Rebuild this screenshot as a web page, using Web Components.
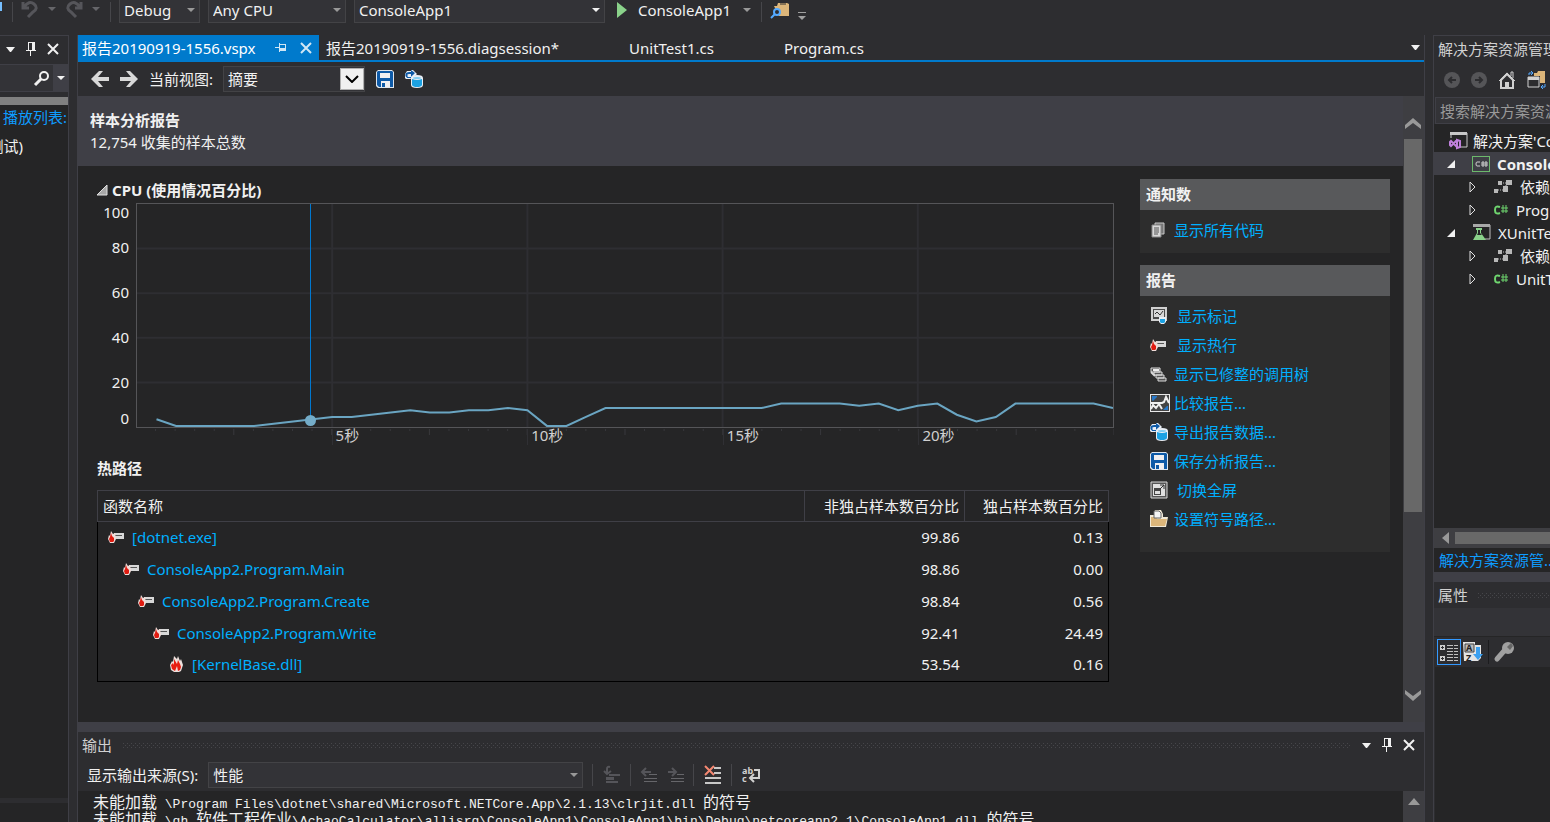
<!DOCTYPE html>
<html lang="zh-CN">
<head>
<meta charset="utf-8">
<title>ConsoleApp1 - Microsoft Visual Studio</title>
<style>
    html, body {
        margin: 0;
        height: 100%;
    }
    body {
        --shell: #2d2d30;
        --content: #252526;
        --line: #3f3f46;
        --field: #333337;
        --accent: #007acc;
        --link: #00b0ff;
        background: var(--shell);
        color: #f1f1f1;
        font: 15px/22px "Noto Sans", "Noto Sans CJK SC", sans-serif;
        overflow: hidden;
    }
</style>
</head>
<body>
<ide-shell></ide-shell>

<script>
const ICONS = {
    back: [18, 18, '<path d="M8 1 0 9l8 8h4L7 11h11V7H7l5-6z" fill="#d8d8d8"/>'],
    forward: [18, 18, '<path d="M10 1l8 8-8 8H6l5-6H0V7h11L6 1z" fill="#d8d8d8"/>'],
    save: [18, 18, '<path d="M2 0h14l2 2v16H2l-2-2V2z" fill="#dfe6ee"/><path d="M2 1h14l1 1v15H3l-2-2V2z" fill="#0e5aa7"/><path d="M4 3h10v5H4zM5 11h9v6H5z" fill="#f0eff1"/><path d="M6 13h3v4H6z" fill="#0e5aa7"/>'],
    export: [18, 18, '<path d="M0 8V4l2-3h4V0h2l4 4-4 4-3 1H1z" fill="#e8eef5"/><path d="M2 7Q0 3 4 3h3" fill="none" stroke="#0e5aa7" stroke-width="2"/><path d="M6 0l4 3-4 4zM2 7h4v1H2z" fill="#0e5aa7"/><path d="M6 8q0-3 6-3t6 3v7q0 3-6 3t-6-3z" fill="#e8eef5"/><path d="M7 9v6q1 2 5 2t5-2V9q-5 2-10 0z" fill="#1ba1e2"/><ellipse cx="12" cy="8" rx="4" ry="1" fill="#7fcdf2"/>'],
    undo: [18, 18, '<path d="M2 2v6h6M3 7q5-7 10-3t-1 8l-5 5" fill="none" stroke="#55555a" stroke-width="3"/>'],
    redo: [18, 18, '<path d="M16 2v6h-6M15 7Q10 0 5 4t1 8l5 5" fill="none" stroke="#55555a" stroke-width="3"/>'],
    down: [9, 5, '<path d="M0 0h9L5 5H4z" fill="currentColor"/>'],
    smallDown: [8, 4, '<path d="M0 0h8L4 4z" fill="currentColor"/>'],
    play: [12, 16, '<path d="M1 0l10 8-10 8z" fill="#8ad28a"/>'],
    find: [18, 18, '<path d="M3 5h3l1-3h9l2 1v12H8z" fill="#dcb67a"/><path d="M9 3h6" stroke="#2d2d30" stroke-width="1"/><circle cx="6" cy="11" r="3" fill="#2d2d30" stroke="#55aaff" stroke-width="2"/><path d="M4 13l-4 4" stroke="#55aaff" stroke-width="2"/>'],
    overflow: [8, 8, '<path d="M0 0h8v1H0zM0 4h8L4 8z" fill="#a0a0a0"/>'],
    pin: [10, 14, '<path d="M0 8h10v1H0zM2 0h7v9H8V1H3v8H2zM4 9h1v5H4zM6 1h2v7H6z" fill="currentColor"/>'],
    pinned: [12, 10, '<path d="M0 4h4v1H0zM4 0h1v9H4zM5 1h6v7H5V7h5V2H5zM5 5h5v2H5z" fill="currentColor"/>'],
    close: [12, 12, '<path d="M1 1l10 10M11 1L1 11" stroke="currentColor" stroke-width="2"/>'],
    search: [17, 16, '<circle cx="11" cy="6" r="4" fill="none" stroke="#f1f1f1" stroke-width="2"/><path d="M8 9l-6 6" stroke="#f1f1f1" stroke-width="3"/>'],
    navBack: [16, 16, '<circle cx="8" cy="8" r="8" fill="#555558"/><path d="M12 8H5M8 5L5 8l3 3" fill="none" stroke="#2d2d30" stroke-width="2"/>'],
    navForward: [16, 16, '<circle cx="8" cy="8" r="8" fill="#555558"/><path d="M4 8h7M8 5l3 3-3 3" fill="none" stroke="#2d2d30" stroke-width="2"/>'],
    home: [18, 20, '<path d="M1 11l8-8 8 8M13 6V2h2v6" fill="none" stroke="#d0d0d0" stroke-width="1"/><path d="M3 10v8h12v-8L9 4z" fill="none" stroke="#d0d0d0" stroke-width="2"/><path d="M7 12h4v7H7z" fill="#d0d0d0"/>'],
    sync: [20, 18, '<path d="M7 5V2h3l1-2h7v12h-5V5z" fill="#dcb67a"/><path d="M1 6h11v10H1z" fill="#2d2d30" stroke="#d0d0d0" stroke-width="1"/><path d="M1 6h11v3H1z" fill="#d0d0d0"/><path d="M2 4V2h4M4 0l2 2-2 2M18 13v3h-4M16 14l-2 2 2 2" fill="none" stroke="#55aaff" stroke-width="1"/>'],
    solution: [19, 17, '<path d="M2 6V1h16v14h-6" fill="none" stroke="#c8c8c8" stroke-width="1"/><path d="M1 0h17v3H1z" fill="#c8c8c8"/><path d="M8 8v8l3-1V9zL2 14l-1-1v-3l1-1 6 6" fill="none" stroke="#c080dc" stroke-width="2"/>'],
    project: [18, 16, '<path d="M0 0h18v16H0zM1 1v14h16V1z" fill="#6cb96c" fill-rule="evenodd"/><path d="M8 6H5q-1 0-1 2t1 2h3M11 5v6M14 5v6M9 7h7M9 9h7" fill="none" stroke="#d0d0d0" stroke-width="1"/>'],
    testProject: [19, 17, '<path d="M2 3V1h16v14h-5" fill="none" stroke="#c0c0c0" stroke-width="1"/><path d="M1 0h17v3H1z" fill="#a8a8a8"/><path d="M4 4h6v2H9v3l5 7H1l4-7V6H4z" fill="#8ad28a"/><path d="M6 6h2v3l2 2H5l1-2z" fill="#252526"/>'],
    refs: [18, 13, '<path d="M4 1h4v4H4zM12 0h6v5h-6zM0 9h4v4H0zM9 6h5v6H9z" fill="#b8b8b8"/><path d="M9 3h3M4 10h5M12 5v2" stroke="#b8b8b8" stroke-width="1" stroke-dasharray="1 1"/>'],
    csharp: [14, 10, '<path d="M6 2Q1 0 1 5t5 3" fill="none" stroke="#6fd66f" stroke-width="2"/><path d="M9 0v8M12 0v8M7 3h7M7 6h7" fill="none" stroke="#6fd66f" stroke-width="1"/>'],
    open: [8, 8, '<path d="M8 0v8H0z" fill="#f1f1f1"/>'],
    closed: [8, 12, '<path d="M1 1l5 5-5 5z" fill="none" stroke="#e0e0e0" stroke-width="1"/>'],
    expander: [10, 10, '<path d="M10 0v10H0z" fill="#a8a8a8" stroke="#e0e0e0" stroke-width="1"/>'],
    docs: [16, 16, '<path d="M5 1h9v11H5z" fill="#777" stroke="#c8c8c8" stroke-width="1"/><path d="M2 3h9v12H2z" fill="#d8d8d8" stroke="#888" stroke-width="1"/><path d="M4 6h5M4 8h5M4 10h5M4 12h4" stroke="#555" stroke-width="1"/>'],
    marks: [17, 17, '<path d="M2 1h14v12H2z" fill="#4a4a4a" stroke="#d0d0d0" stroke-width="2"/><path d="M4 3h10v7H4z" fill="#d8d8d8"/><path d="M5 7l2-2 3 3 3-4" fill="none" stroke="#333" stroke-width="1"/><path d="M9 10h7v5l-2 2h-3l-2-2z" fill="#e8eef5"/><path d="M10 12h5v3l-1 1h-3l-1-1z" fill="#1ba1e2"/>'],
    hotLine: [16, 12, '<path d="M6 2h10v6H6z" fill="#d8d8d8"/><path d="M7 4h7v1H7z" fill="#555"/><path d="M3 0l2 3 2-1 1 6-2 4H2L0 8l1-4 1 1z" fill="#f0dcd8"/><path d="M3 2l1 3 2 2v3l-1 1H2L1 8l1-2z" fill="#e01b10"/>'],
    flame: [13, 16, '<path d="M4 0l3 3 1-3 2 5 1-2 2 6-2 6-2 1H4l-3-2-1-5 2-4 1 1z" fill="#eee0dc"/><path d="M4 3l3 5 1-4 2 4 1 3-1 3-2 1-1-5-2 5-3-2-1-4 2-2 1 2z" fill="#e81c10"/>'],
    callTree: [17, 16, '<path d="M1 2h9v4H1zM4 6h8v3H4zM6 9h8v3H6zM8 12h8v3H8z" fill="#555" stroke="#dadada" stroke-width="1"/><path d="M3 3h6v2H3z" fill="#eee"/><path d="M1 6l4 4" stroke="#dadada" stroke-width="2"/>'],
    compare: [20, 18, '<path d="M0 0h20v18H0z" fill="#e8e8e8"/><path d="M1 1h18v16H1z" fill="#444"/><path d="M1 15l2-4 3 3 3-4 3 5M1 9h11l2-1 2-5 3 6" fill="none" stroke="#f0f0f0" stroke-width="2"/><path d="M2 6V2h5v1L3 7zM18 12v4h-5l4-4z" fill="#2878c8"/>'],
    fullscreen: [18, 18, '<path d="M1 1h16v16H1z" fill="#555" stroke="#d8d8d8" stroke-width="1"/><path d="M3 3h12v12H3z" fill="#e0e0e0"/><path d="M4 7h7v7H4z" fill="#444"/><path d="M5 10h5v3H5z" fill="#ddd"/><path d="M10 8l4-4M10 4h4v4" fill="none" stroke="#333" stroke-width="1"/>'],
    folder: [18, 18, '<path d="M0 17V5h4l1-5h6l2 4v3h5l-2 10z" fill="#f2ead8"/><path d="M1 16V7h5l1 2h10l-2 7z" fill="#dcb67a"/><path d="M4 1h5l2 2v5H4z" fill="#f5f5f5" stroke="#666" stroke-width="1"/>'],
    goTo: [18, 18, '<path d="M7 1q-3-1-3 2v5M1 5l3 3 4-3M6 9h11M3 16h12" fill="none" stroke="#55555a" stroke-width="2"/><path d="M3 11h8v3H3z" fill="#55555a"/>'],
    prev: [16, 16, '<path d="M1 5h9M5 1L1 5l4 4" fill="none" stroke="#55555a" stroke-width="2"/><path d="M8 7h8v1H8zM3 11h13v1H3zM3 14h13v1H3z" fill="#66666a"/>'],
    next: [16, 16, '<path d="M0 5h8M4 1l4 4-4 4" fill="none" stroke="#55555a" stroke-width="2"/><path d="M9 7h7v1H9zM3 11h13v1H3zM3 14h13v1H3z" fill="#66666a"/>'],
    clear: [18, 18, '<path d="M10 1h7v2h-7zM10 6h7v2h-7zM1 11h16v2H1zM1 16h16v2H1z" fill="#c8c8c8"/><path d="M1 0l9 9M10 0L1 9" stroke="#f48771" stroke-width="2"/>'],
    wrap: [20, 18, '<text x="0" y="8" font-size="9" font-weight="700" fill="#d0d0d0">ab</text><text x="0" y="16" font-size="9" font-weight="700" fill="#d0d0d0">c</text><path d="M12 4h5v8H9M12 8l-4 4 4 4" fill="none" stroke="#d0d0d0" stroke-width="2"/>'],
    categories: [18, 18, '<path d="M0 2h5v5H0zM0 13h5v5H0z" fill="#d0d0d0"/><path d="M2 3h1v1h1v1H3v1H2V5H1V4h1zM2 14h1v1h1v1H3v1H2v-1H1v-1h1z" fill="#2d2d30"/><path d="M7 2h6v1H7zM7 5h6v1H7zM7 8h6v1H7zM7 11h6v1H7zM7 14h6v1H7zM7 17h6v1H7zM14 2h4v1h-4zM14 5h4v1h-4zM14 8h4v1h-4zM14 11h4v1h-4zM14 14h4v1h-4zM14 17h4v1h-4z" fill="#c0c0c0"/>'],
    sortAz: [20, 20, '<path d="M0 0h12v3h6v13l-3 3H1z" fill="#e4e4e4"/><path d="M2 2h9v8H2z" fill="#bbb" stroke="#444" stroke-width="1"/><text x="3" y="9" font-size="9" font-weight="700" fill="#222">A</text><text x="3" y="19" font-size="9" font-weight="700" fill="#222">Z</text><path d="M13 5h4v7h3l-5 6-5-6h3z" fill="#3ba0f0"/>'],
    wrench: [20, 20, '<path d="M3 17l7-8" stroke="#a0a0a0" stroke-width="5" stroke-linecap="round"/><circle cx="14" cy="6" r="6" fill="#a0a0a0"/><path d="M13 5l4-4 2 3-3 4z" fill="#666"/>'],
    up: [16, 11, '<path d="M0 7l8-7 8 7v4L8 5l-8 6z" fill="#999"/>'],
    chevron: [16, 11, '<path d="M0 0l8 6 8-6v4l-8 7-8-7z" fill="#999"/>'],
    arrowUp: [12, 7, '<path d="M6 0l6 7H0z" fill="#999"/>'],
    arrowLeft: [7, 12, '<path d="M0 6l7-6v12z" fill="#999"/>']
};

class IdeIcon extends HTMLElement {
    connectedCallback() {
        const [w, h, body] = ICONS[this.getAttribute('name')];
        this.attachShadow({ mode: 'open' }).innerHTML = `
            <style>
                :host { display: inline-flex; flex: none; }
                svg { display: block; overflow: visible; }
            </style>
            <svg width="${w}" height="${h}" viewBox="0 0 ${w} ${h}" aria-hidden="true">${body}</svg>
        `;
    }
}

// Drop-down with an optional label in front: <ide-select label="" value="">
class IdeSelect extends HTMLElement {
    connectedCallback() {
        const label = this.getAttribute('label');
        const value = this.getAttribute('value');
        this.attachShadow({ mode: 'open' }).innerHTML = `
            <style>
                :host { display: flex; align-items: center; gap: 10px; flex: none; }
                label { white-space: nowrap; }
                .box { display: grid; flex: 1; align-items: center; color: #999; }
                select {
                    grid-area: 1 / 1;
                    appearance: none;
                    width: 100%;
                    height: 26px;
                    margin: 0;
                    padding: 0 20px 0 4px;
                    box-sizing: border-box;
                    border: 1px solid #434346;
                    border-radius: 0;
                    background: var(--field);
                    color: #f1f1f1;
                    font: inherit;
                    line-height: 22px;
                }
                ide-icon { grid-area: 1 / 1; justify-self: end; margin-right: 5px; pointer-events: none; }
                :host([bright]) .box { color: #f1f1f1; }
                .key {
                    grid-area: 1 / 1;
                    justify-self: end;
                    width: 22px;
                    height: 20px;
                    margin-right: 1px;
                    display: grid;
                    place-items: center;
                    border: 1px solid #b0b0b0;
                    background: #f0f0f0;
                    pointer-events: none;
                }
                .key svg { display: block; }
            </style>
            ${label ? `<label for="field">${label}</label>` : ''}
            <div class="box">
                <select id="field" ${label ? '' : `aria-label="${value}"`}><option>${value}</option></select>
                ${this.hasAttribute('key')
                    ? '<span class="key"><svg width="14" height="8"><path d="M1 1l6 6 6-6" fill="none" stroke="#000" stroke-width="2"/></svg></span>'
                    : '<ide-icon name="smallDown"></ide-icon>'}
            </div>
        `;
    }
}

class IdeButton extends HTMLElement {
    connectedCallback() {
        const name = this.getAttribute('icon');
        this.attachShadow({ mode: 'open' }).innerHTML = `
            <style>
                :host { display: inline-flex; flex: none; }
                button {
                    display: flex;
                    align-items: center;
                    gap: 10px;
                    margin: 0;
                    padding: 0;
                    border: 0;
                    background: none;
                    color: inherit;
                    font: inherit;
                    white-space: nowrap;
                }
                :host([checked]) button { padding: 3px 2px; border: 1px solid #3399ff; }
            </style>
            <button type="button" aria-label="${this.getAttribute('label') || name}"><ide-icon name="${name}"></ide-icon><slot></slot></button>
        `;
    }
}

class IdeGrip extends HTMLElement {
    connectedCallback() {
        this.attachShadow({ mode: 'open' }).innerHTML = `
            <style>
                :host { display: block; flex: 1; min-width: 0; height: 5px; overflow: hidden; }
                svg { display: block; }
            </style>
            <svg width="100%" height="5" aria-hidden="true">
                <defs><pattern id="dots" width="4" height="4" patternUnits="userSpaceOnUse">
                    <path d="M0 0h1v1H0zM2 2h1v1H2z" fill="#46464a"/>
                </pattern></defs>
                <rect width="100%" height="5" fill="url(#dots)"/>
            </svg>
        `;
    }
}

class MainToolbar extends HTMLElement {
    connectedCallback() {
        this.attachShadow({ mode: 'open' }).innerHTML = `
            <style>
                :host {
                    display: flex;
                    align-items: flex-end;
                    height: 23px;
                    overflow: hidden;
                    flex: none;
                    color: #999;
                }
                i { width: 1px; height: 20px; background: #46464a; flex: none; margin: 0 8px 1px; }
                .edge { width: 2px; height: 9px; margin: 0 10px 12px 0; background: #75beff; }
                .history { display: flex; align-items: center; gap: 9px; height: 28px; color: #66666a; }
                i:first-of-type { margin-left: 0; }
                .run { margin: 0 0 2px 11px; color: #f1f1f1; }
                .drop { margin: 0 10px 11px 12px; }
                .find { margin: 0 0 4px 9px; }
                .more { margin: 0 0 3px 9px; }
                ide-select + ide-select { margin-left: 8px; }
            </style>
            <div class="edge"></div>
            <i></i>
            <div class="history">
                <ide-button icon="undo"></ide-button><ide-icon name="smallDown"></ide-icon>
                <ide-button icon="redo"></ide-button><ide-icon name="smallDown"></ide-icon>
            </div>
            <i style="margin-left: 10px"></i>
            <ide-select value="Debug" style="width: 81px"></ide-select>
            <ide-select value="Any CPU" style="width: 138px"></ide-select>
            <ide-select value="ConsoleApp1" bright style="width: 251px"></ide-select>
            <ide-button class="run" icon="play" label="ConsoleApp1">ConsoleApp1</ide-button>
            <ide-icon class="drop" name="smallDown"></ide-icon>
            <i style="margin-left: 0; margin-right: 0"></i>
            <ide-button class="find" icon="find"></ide-button>
            <ide-button class="more" icon="overflow"></ide-button>
        `;
    }
}

class TestPane extends HTMLElement {
    connectedCallback() {
        this.attachShadow({ mode: 'open' }).innerHTML = `
            <style>
                :host {
                    display: flex;
                    flex-direction: column;
                    box-sizing: border-box;
                    border: solid var(--line);
                    border-width: 1px 1px 0 0;
                    background: var(--content);
                    overflow: hidden;
                }
                header, .search { display: flex; align-items: center; justify-content: flex-end; background: var(--shell); }
                header { height: 26px; gap: 11px; padding: 0 9px 2px 0; }
                .search { height: 26px; border: solid var(--line); border-width: 1px 0; background: var(--field); }
                .search ide-button:last-child { width: 15px; height: 26px; margin-left: 3px; justify-content: center; background: var(--line); }
                .gap { height: 5px; background: var(--shell); }
                .bar { height: 8px; background: #808080; }
                a { display: block; margin: 1px 1px 0 3px; white-space: nowrap; color: #0e9cff; text-decoration: none; }
                .node { display: flex; justify-content: flex-end; width: 23px; margin-top: 7px; overflow: hidden; white-space: nowrap; }
                .split { height: 5px; margin-top: auto; background: var(--shell); }
                .foot { height: 19px; }
            </style>
            <header>
                <ide-button icon="down"></ide-button>
                <ide-button icon="pin"></ide-button>
                <ide-button icon="close"></ide-button>
            </header>
            <div class="search"><ide-button icon="search"></ide-button><ide-button icon="smallDown"></ide-button></div>
            <div class="gap"></div>
            <div class="bar"></div>
            <a href="#playlist">播放列表:</a>
            <div class="node">测试)</div>
            <div class="split"></div>
            <div class="foot"></div>
        `;
    }
}

class DocumentTabs extends HTMLElement {
    connectedCallback() {
        this.attachShadow({ mode: 'open' }).innerHTML = `
            <style>
                :host { display: flex; height: 25px; align-items: center; border-bottom: 2px solid var(--accent); flex: none; }
                a { color: inherit; text-decoration: none; white-space: nowrap; }
                .active {
                    display: flex;
                    align-items: center;
                    gap: 13px;
                    width: 241px;
                    height: 26px;
                    box-sizing: border-box;
                    padding: 0 7px 0 4px;
                    background: var(--accent);
                    color: #fff;
                }
                .active a { flex: 1; }
                .active ide-button { color: #d0e6f5; }
                .tab { padding-left: 7px; }
                .tab + .tab { padding-left: 70px; }
                .drop { margin: 0 4px 0 auto; }
            </style>
            <div class="active">
                <a href="#vspx">报告20190919-1556.vspx</a>
                <ide-button icon="pinned"></ide-button>
                <ide-button icon="close"></ide-button>
            </div>
            <a class="tab" href="#diagsession">报告20190919-1556.diagsession*</a>
            <a class="tab" href="#unittest">UnitTest1.cs</a>
            <a class="tab" href="#program">Program.cs</a>
            <ide-button class="drop" icon="down"></ide-button>
        `;
    }
}

// CPU usage in percent, one sample each half second
const SAMPLES = [3, 0, 0, 0, 0, 0, 1, 2, 3, 4, 4, 5, 6, 7, 6, 6, 7, 7, 8, 7, 0, 0, 4, 8, 8, 8, 8, 8, 8, 8, 8, 8, 10, 10, 10, 10, 9, 10, 7, 9, 10, 5, 2, 4, 10, 10, 10, 10, 10, 8];

class CpuChart extends HTMLElement {
    connectedCallback() {
        const points = SAMPLES.map((v, i) => `${(i + 1) * 20},${995 - v * 10}`).join(' ');
        const rows = [200, 400, 600, 800].map(y => `M0 ${y}H1000`).join('');
        const cols = [200, 400, 600, 800].map(x => `M${x} 0V1000`).join('');
        const ticks = SAMPLES.map((v, i) => `M${(i + 1) * 20} 0V${(i + 1) % 5 ? 2 : 6}`).join('');
        this.attachShadow({ mode: 'open' }).innerHTML = `
            <style>
                :host { display: block; }
                h2 { display: flex; align-items: center; gap: 5px; margin: 0; font-size: 15px; line-height: 22px; }
                .body { display: grid; grid-template-columns: 32px 1fr; column-gap: 7px; margin-top: 2px; }
                .scale { display: flex; flex-direction: column; height: 226px; line-height: 18px; text-align: right; }
                .scale span { height: 45px; }
                .scale span:first-child { height: 35px; }
                .scale span:nth-child(5) { height: 36px; }
                .scale span:last-child { height: 18px; }
                .plot { position: relative; height: 223px; border: 1px solid #555558; }
                .plot svg { display: block; width: 100%; height: 100%; overflow: hidden; }
                path, polyline { vector-effect: non-scaling-stroke; fill: none; }
                .cursor { position: absolute; left: calc(17.7% - 5px); top: 0; bottom: 1px; width: 11px; }
                .cursor::before { content: ""; position: absolute; left: 5px; top: 0; bottom: 6px; width: 1px; background: #0078d0; }
                .cursor::after { content: ""; position: absolute; left: 0; bottom: 0; width: 11px; height: 11px; border-radius: 50%; background: #74acc8; }
                .times { grid-area: 2 / 2; display: grid; grid-template-columns: repeat(5, 1fr); height: 16px; line-height: 12px; color: #d0d0d0; }
                .times span + span { padding-left: 3px; border-left: 1px solid #303034; }
                .ticks { grid-area: 2 / 2; width: 100%; height: 6px; }
            </style>
            <h2><ide-icon name="expander"></ide-icon>CPU (使用情况百分比)</h2>
            <div class="body">
                <div class="scale"><span>100</span><span>80</span><span>60</span><span>40</span><span>20</span><span>0</span></div>
                <div class="plot">
                    <svg viewBox="0 0 1000 1000" preserveAspectRatio="none">
                        <path d="${rows}${cols}" stroke="#2e2e32" stroke-width="2"/>
                        <polyline points="${points}" stroke="#6aa5c2" stroke-width="2"/>
                    </svg>
                    <div class="cursor"></div>
                </div>
                <svg class="ticks" viewBox="0 0 1000 6" preserveAspectRatio="none"><path d="${ticks}" stroke="#38383c" stroke-width="1"/></svg>
                <div class="times"><span></span><span>5秒</span><span>10秒</span><span>15秒</span><span>20秒</span></div>
            </div>
        `;
    }
}

const HOT_PATH = [
    ['hotLine', '[dotnet.exe]', '99.86', '0.13'],
    ['hotLine', 'ConsoleApp2.Program.Main', '98.86', '0.00'],
    ['hotLine', 'ConsoleApp2.Program.Create', '98.84', '0.56'],
    ['hotLine', 'ConsoleApp2.Program.Write', '92.41', '24.49'],
    ['flame', '[KernelBase.dll]', '53.54', '0.16']
];

class HotPath extends HTMLElement {
    connectedCallback() {
        this.attachShadow({ mode: 'open' }).innerHTML = `
            <style>
                :host { display: block; }
                h2 { margin: 0 0 11px; font-size: 15px; line-height: 22px; }
                table { width: 100%; border-collapse: collapse; table-layout: fixed; border: 1px solid #000; }
                th, td { padding: 0 5px; text-align: right; font-weight: 400; white-space: nowrap; }
                th { height: 29px; padding-bottom: 1px; border: 1px solid var(--line); }
                td { height: 29px; padding-bottom: 3px; }
                tr:last-child td { height: 28px; }
                th:first-child, td:first-child { text-align: left; }
                th:nth-child(2) { width: 149px; }
                th:nth-child(3) { width: 133px; }
                a { display: flex; align-items: center; gap: 8px; color: var(--link); text-decoration: none; }
                ide-icon { width: 16px; justify-content: center; }
            </style>
            <h2>热路径</h2>
            <table>
                <thead><tr><th>函数名称</th><th>非独占样本数百分比</th><th>独占样本数百分比</th></tr></thead>
                <tbody>
                    ${HOT_PATH.map(([icon, name, inclusive, exclusive], depth) => `
                        <tr>
                            <td><a href="#fn${depth}" style="margin-left: ${depth * 15 + 5}px"><ide-icon name="${icon}"></ide-icon>${name}</a></td>
                            <td>${inclusive}</td>
                            <td>${exclusive}</td>
                        </tr>
                    `).join('')}
                </tbody>
            </table>
        `;
    }
}

class ActionGroup extends HTMLElement {
    connectedCallback() {
        this.attachShadow({ mode: 'open' }).innerHTML = `
            <style>
                :host { display: block; background: #2d2d2d; }
                h3 { margin: 0; padding: 0 6px; background: #58595b; font-size: 15px; line-height: 31px; }
                .list { display: flex; flex-direction: column; padding: 5px 10px 9px; }
                :host([tall]) .list { padding-bottom: 19px; }
            </style>
            <h3>${this.getAttribute('heading')}</h3>
            <div class="list"><slot></slot></div>
        `;
    }
}

class ActionLink extends HTMLElement {
    connectedCallback() {
        this.attachShadow({ mode: 'open' }).innerHTML = `
            <style>
                :host { display: block; }
                a { display: flex; align-items: center; height: 29px; color: var(--link); text-decoration: none; }
                .icon { display: flex; width: 24px; }
                :host([wide]) .icon { width: 27px; }
            </style>
            <a href="#${this.getAttribute('icon')}"><span class="icon"><ide-icon name="${this.getAttribute('icon')}"></ide-icon></span><slot></slot></a>
        `;
    }
}

class ScrollBar extends HTMLElement {
    connectedCallback() {
        this.attachShadow({ mode: 'open' }).innerHTML = `
            <style>
                :host { display: flex; flex-direction: column; align-items: center; width: 20px; flex: none; background: #3e3e42; padding-right: 1px; }
                .cap { display: grid; height: 43px; place-items: center; padding-top: 11px; box-sizing: border-box; }
                .cap.end { padding: 0 0 11px; }
                .track { flex: 1; width: 18px; }
                .thumb { height: 69%; background: #686868; }
            </style>
            <div class="cap"><ide-icon name="up"></ide-icon></div>
            <div class="track"><div class="thumb"></div></div>
            <div class="cap end"><ide-icon name="chevron"></ide-icon></div>
        `;
    }
}

class ReportView extends HTMLElement {
    connectedCallback() {
        this.attachShadow({ mode: 'open' }).innerHTML = `
            <style>
                :host { display: flex; flex-direction: column; flex: 1; min-height: 0; }
                .bar { display: flex; align-items: center; gap: 11px; height: 34px; padding-left: 13px; flex: none; }
                .view { display: flex; flex: 1; min-height: 0; }
                .page { flex: 1; min-width: 0; background: var(--content); overflow: hidden; }
                .intro { padding: 13px 12px 12px; background: var(--line); }
                h1 { margin: 0; font-size: 15px; line-height: 22px; }
                p { margin: 0; line-height: 22px; padding-bottom: 1px; }
                .columns { display: flex; gap: 26px; padding: 13px 13px 0 19px; }
                .main { flex: 1; min-width: 0; }
                .side { width: 250px; display: flex; flex-direction: column; gap: 12px; align-self: flex-start; }
                hot-path { margin: 12px 5px 0 0; }
            </style>
            <div class="bar">
                <ide-button icon="back"></ide-button>
                <ide-button icon="forward"></ide-button>
                <ide-select label="当前视图:" value="摘要" key style="width: 216px"></ide-select>
                <ide-button icon="save"></ide-button>
                <ide-button icon="export"></ide-button>
            </div>
            <div class="view">
                <div class="page">
                    <div class="intro">
                        <h1>样本分析报告</h1>
                        <p>12,754 收集的样本总数</p>
                    </div>
                    <div class="columns">
                        <div class="main">
                            <cpu-chart></cpu-chart>
                            <hot-path></hot-path>
                        </div>
                        <div class="side">
                            <action-group heading="通知数">
                                <action-link icon="docs">显示所有代码</action-link>
                            </action-group>
                            <action-group heading="报告" tall>
                                <action-link icon="marks" wide>显示标记</action-link>
                                <action-link icon="hotLine" wide>显示热行</action-link>
                                <action-link icon="callTree">显示已修整的调用树</action-link>
                                <action-link icon="compare">比较报告...</action-link>
                                <action-link icon="export">导出报告数据...</action-link>
                                <action-link icon="save">保存分析报告...</action-link>
                                <action-link icon="fullscreen" wide>切换全屏</action-link>
                                <action-link icon="folder">设置符号路径...</action-link>
                            </action-group>
                        </div>
                    </div>
                </div>
                <scroll-bar></scroll-bar>
            </div>
        `;
    }
}

class OutputPane extends HTMLElement {
    connectedCallback() {
        this.attachShadow({ mode: 'open' }).innerHTML = `
            <style>
                :host { display: block; flex: none; border-top: 10px solid var(--line); }
                header { display: flex; align-items: center; gap: 11px; height: 26px; padding: 0 9px 0 4px; color: #d0d0d0; }
                header ide-button { color: #f1f1f1; }
                .bar { display: flex; align-items: center; height: 33px; padding-left: 9px; }
                i { width: 1px; height: 22px; margin: 0 10px 0 9px; background: #46464a; }
                .bar ide-button + ide-button { margin-left: 11px; }
                .text { display: flex; justify-content: space-between; height: 31px; background: var(--content); overflow: hidden; }
                pre { margin: 5px 0 0 15px; font: 13px/17px "Liberation Mono", "Noto Sans CJK SC", monospace; }
                pre div { height: 17px; }
                pre span { font-size: 16px; }
                .scroll { width: 21px; display: flex; justify-content: center; padding-top: 7px; background: #3e3e42; }
            </style>
            <header>输出<ide-grip></ide-grip>
                <ide-button icon="down"></ide-button>
                <ide-button icon="pin"></ide-button>
                <ide-button icon="close"></ide-button>
            </header>
            <div class="bar">
                <ide-select label="显示输出来源(S):" value="性能" style="width: 496px"></ide-select>
                <i></i><ide-button icon="goTo"></ide-button>
                <i></i><ide-button icon="prev"></ide-button><ide-button icon="next"></ide-button>
                <i></i><ide-button icon="clear"></ide-button>
                <i></i><ide-button icon="wrap"></ide-button>
            </div>
            <div class="text">
                <pre><div><span>未能加载</span> \\Program Files\\dotnet\\shared\\Microsoft.NETCore.App\\2.1.13\\clrjit.dll <span>的符号</span></div><div><span>未能加载</span> \\gh <span>软件工程作业</span>\\AchaoCalculator\\allisrg\\ConsoleApp1\\ConsoleApp1\\bin\\Debug\\netcoreapp2.1\\ConsoleApp1.dll <span>的符号</span></div></pre>
                <div class="scroll"><ide-icon name="arrowUp"></ide-icon></div>
            </div>
        `;
    }
}

class SolutionPane extends HTMLElement {
    connectedCallback() {
        const rows = [
            [0, '', 'solution', "解决方案'ConsoleApp1'"],
            [1, 'open', 'project', 'ConsoleApp1'],
            [2, 'closed', 'refs', '依赖项'],
            [2, 'closed', 'csharp', 'Program.cs'],
            [1, 'open', 'testProject', 'XUnitTest'],
            [2, 'closed', 'refs', '依赖项'],
            [2, 'closed', 'csharp', 'UnitTest1.cs']
        ];
        this.attachShadow({ mode: 'open' }).innerHTML = `
            <style>
                :host {
                    display: flex;
                    flex-direction: column;
                    box-sizing: border-box;
                    border: solid var(--line);
                    border-width: 1px 0 0 1px;
                    overflow: hidden;
                    white-space: nowrap;
                }
                :host > * { flex: none; }
                header { display: flex; align-items: center; height: 26px; padding-left: 4px; color: #d0d0d0; }
                .bar { display: flex; align-items: center; gap: 11px; height: 35px; padding-left: 10px; }
                input {
                    width: 160px;
                    height: 27px;
                    margin: 0 0 0 1px;
                    padding: 0 4px;
                    box-sizing: border-box;
                    border: 1px solid var(--line);
                    background: var(--field);
                    color: #f1f1f1;
                    font: inherit;
                }
                input::placeholder { color: #999; }
                .tree { height: 404px; margin: 0; padding: 5px 0 0; box-sizing: border-box; background: var(--content); list-style: none; }
                .tree li { display: flex; align-items: center; height: 23px; padding-left: 15px; }
                .tree .level1 { padding-left: 13px; }
                .tree .level2 { padding-left: 35px; }
                .tree .selected { background: var(--line); font-weight: 700; }
                .arrow { display: flex; justify-content: center; width: 10px; margin-right: 17px; }
                .kind { display: flex; justify-content: center; width: 20px; margin-right: 5px; }
                .level1 .kind { margin-right: 7px; }
                .level2 .kind { width: 22px; margin-right: 8px; }
                .hscroll { display: flex; align-items: center; gap: 6px; height: 20px; padding-left: 8px; background: #3e3e42; }
                .hscroll div { width: 200px; height: 12px; background: #686868; }
                .tab { display: block; padding-left: 5px; height: 24px; line-height: 24px; background: var(--content); color: #0e9cff; text-decoration: none; }
                .split { height: 10px; background: var(--line); }
                .object { height: 28px; background: var(--field); border-bottom: 1px solid #252526; }
                .props { display: flex; align-items: center; height: 30px; padding-left: 3px; }
                .props i { width: 1px; height: 24px; margin: 0 5px; background: #1c1c1e; }
                .grid { flex: 1; margin-left: 1px; background: var(--content); }
            </style>
            <header>解决方案资源管理器</header>
            <div class="bar">
                <ide-button icon="navBack"></ide-button>
                <ide-button icon="navForward"></ide-button>
                <ide-button icon="home"></ide-button>
                <ide-button icon="sync"></ide-button>
            </div>
            <input type="search" placeholder="搜索解决方案资源管理器" aria-label="搜索解决方案资源管理器">
            <ul class="tree">
                ${rows.map(([depth, arrow, kind, text]) => `
                    <li class="level${depth} ${kind === 'project' ? 'selected' : ''}">
                        ${arrow ? `<span class="arrow"><ide-icon name="${arrow}"></ide-icon></span>` : ''}
                        <span class="kind"><ide-icon name="${kind}"></ide-icon></span>${text}
                    </li>
                `).join('')}
            </ul>
            <div class="hscroll"><ide-icon name="arrowLeft"></ide-icon><div></div></div>
            <a class="tab" href="#solution">解决方案资源管...</a>
            <div class="split"></div>
            <header style="gap: 10px">属性<ide-grip></ide-grip></header>
            <div class="object"></div>
            <div class="props">
                <ide-button icon="categories" checked></ide-button>
                <ide-button icon="sortAz" style="margin-left: 2px"></ide-button>
                <i></i>
                <ide-button icon="wrench"></ide-button>
            </div>
            <div class="grid"></div>
        `;
    }
}

class IdeShell extends HTMLElement {
    connectedCallback() {
        this.attachShadow({ mode: 'open' }).innerHTML = `
            <style>
                :host { display: flex; flex-direction: column; height: 100vh; background: var(--shell); }
                main { flex: 1; min-height: 0; display: grid; grid-template-columns: 69px minmax(0, 1fr) 117px; gap: 8px; padding-top: 12px; }
                .documents { display: flex; flex-direction: column; min-height: 0; border: solid var(--line); border-width: 0 1px; }
            </style>
            <main-toolbar></main-toolbar>
            <main>
                <test-pane></test-pane>
                <div class="documents">
                    <document-tabs></document-tabs>
                    <report-view></report-view>
                    <output-pane></output-pane>
                </div>
                <solution-pane></solution-pane>
            </main>
        `;
    }
}

customElements.define('ide-icon', IdeIcon);
customElements.define('ide-select', IdeSelect);
customElements.define('ide-button', IdeButton);
customElements.define('ide-grip', IdeGrip);
customElements.define('main-toolbar', MainToolbar);
customElements.define('test-pane', TestPane);
customElements.define('document-tabs', DocumentTabs);
customElements.define('cpu-chart', CpuChart);
customElements.define('hot-path', HotPath);
customElements.define('action-group', ActionGroup);
customElements.define('action-link', ActionLink);
customElements.define('scroll-bar', ScrollBar);
customElements.define('report-view', ReportView);
customElements.define('output-pane', OutputPane);
customElements.define('solution-pane', SolutionPane);
customElements.define('ide-shell', IdeShell);
</script>
</body>
</html>
